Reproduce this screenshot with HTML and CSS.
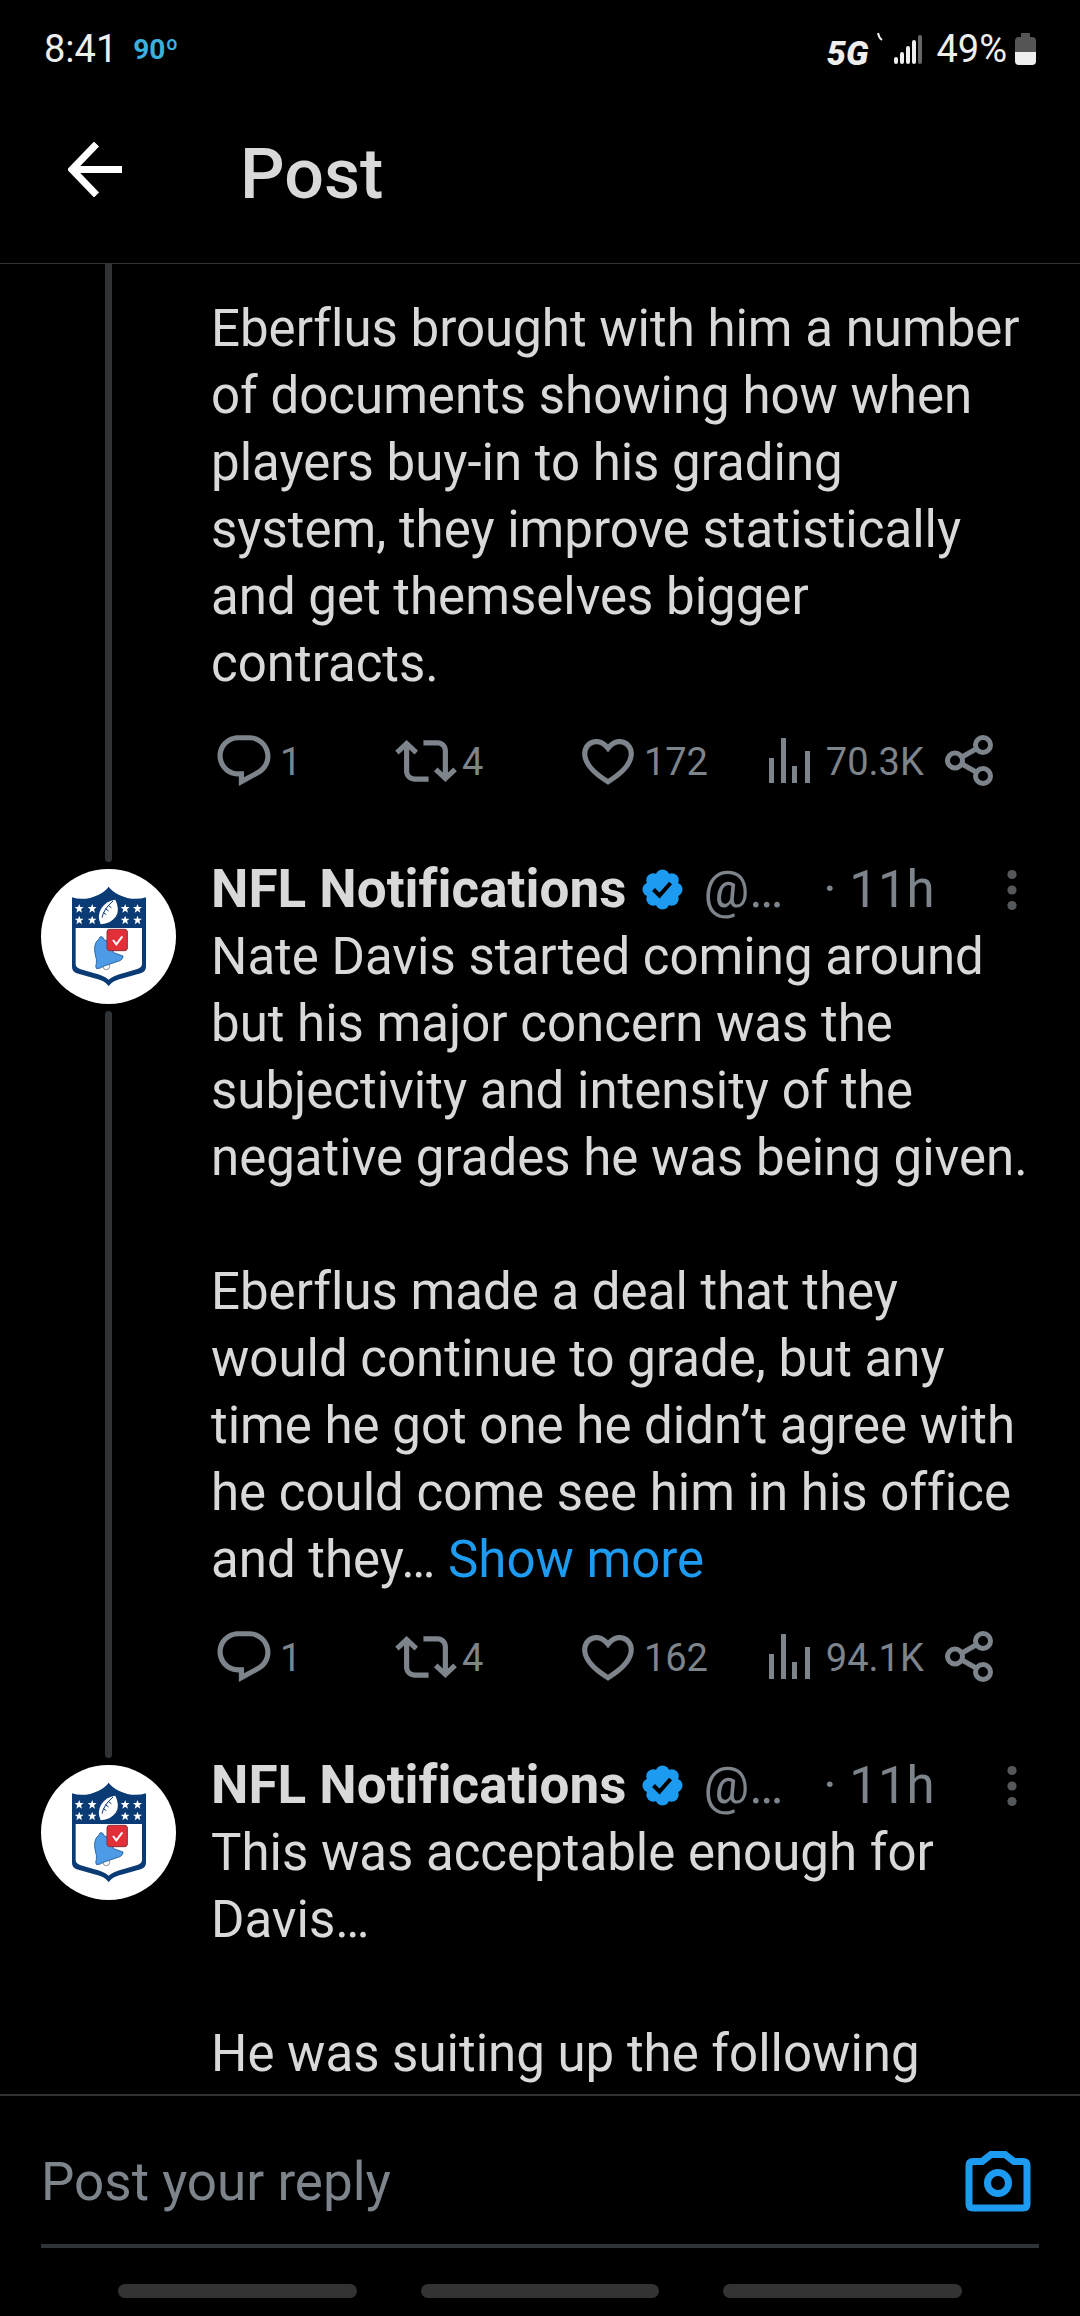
FILE: index.html
```html
<!DOCTYPE html>
<html lang="en">
<head>
<meta charset="utf-8">
<meta name="viewport" content="width=device-width, initial-scale=1">
<title>Post</title>
<link rel="stylesheet" href="styles.css">
</head>
<body>
<svg class="sprite" aria-hidden="true">
  <symbol id="i-reply" viewBox="0 0 24 24"><path d="M1.751 10c0-4.42 3.584-8 8.005-8h4.366c4.49 0 8.129 3.64 8.129 8.13 0 2.96-1.607 5.68-4.196 7.11l-8.054 4.46v-3.69h-.067c-4.49.1-8.183-3.51-8.183-8.01zm8.005-6c-3.317 0-6.005 2.69-6.005 6 0 3.37 2.77 6.08 6.138 6.01l.351-.01h1.761v2.3l5.087-2.81c1.951-1.08 3.163-3.13 3.163-5.36 0-3.39-2.744-6.13-6.129-6.13H9.756z"/></symbol>
  <symbol id="i-repost" viewBox="0 0 24 24"><path d="M4.5 3.88l4.432 4.14-1.364 1.46L5.5 7.55V16c0 1.1.896 2 2 2H13v2H7.5c-2.209 0-4-1.79-4-4V7.55L1.432 9.48.068 8.02 4.5 3.88zM16.5 6H11V4h5.5c2.209 0 4 1.79 4 4v8.45l2.068-1.93 1.364 1.46-4.432 4.14-4.432-4.14 1.364-1.46 2.068 1.93V8c0-1.1-.896-2-2-2z"/></symbol>
  <symbol id="i-like" viewBox="0 0 24 24"><path d="M16.697 5.5c-1.222-.06-2.679.51-3.89 2.16l-.805 1.09-.806-1.09C9.984 6.01 8.526 5.44 7.304 5.5c-1.243.07-2.349.78-2.91 1.91-.552 1.12-.633 2.78.479 4.82 1.074 1.97 3.257 4.27 7.129 6.61 3.87-2.34 6.052-4.64 7.126-6.61 1.111-2.04 1.03-3.7.477-4.82-.561-1.13-1.666-1.84-2.908-1.91zm4.187 7.69c-1.351 2.48-4.001 5.12-8.379 7.67l-.503.3-.504-.3c-4.379-2.55-7.029-5.19-8.382-7.67-1.36-2.5-1.41-4.86-.514-6.67.887-1.79 2.647-2.91 4.601-3.01 1.651-.09 3.368.56 4.798 2.01 1.429-1.45 3.146-2.1 4.796-2.01 1.954.1 3.714 1.22 4.601 3.01.896 1.81.846 4.17-.514 6.67z"/></symbol>
  <symbol id="i-views" viewBox="0 0 62 62"><path d="M10 28h5v25h-5zM22 8h5v45h-5zM33 36h5v17h-5zM46 21h5v32h-5z"/></symbol>
  <symbol id="i-share" viewBox="0 0 62 62"><g fill="none" stroke="currentColor" stroke-width="5"><circle cx="17" cy="30.500" r="7.500"/><circle cx="45" cy="15" r="7.500"/><circle cx="45" cy="46" r="7.500"/><path d="M24 27l14-8M24 34l14 8"/></g></symbol>
  <symbol id="i-verified" viewBox="0 0 41 41"><g fill="#1d9bf0"><circle cx="20.500" cy="20.500" r="16"/><circle cx="20.500" cy="7.500" r="7"/><circle cx="29.700" cy="11.300" r="7"/><circle cx="33.500" cy="20.500" r="7"/><circle cx="29.700" cy="29.700" r="7"/><circle cx="20.500" cy="33.500" r="7"/><circle cx="11.300" cy="29.700" r="7"/><circle cx="7.500" cy="20.500" r="7"/><circle cx="11.300" cy="11.300" r="7"/></g><path d="M11.500 20.500l6 6L28.600 14" fill="none" stroke="#000" stroke-width="4"/></symbol>
  <symbol id="i-more" viewBox="0 0 10 42"><circle cx="5" cy="5.500" r="4.600"/><circle cx="5" cy="21" r="4.600"/><circle cx="5" cy="36.500" r="4.600"/></symbol>
  <symbol id="star" viewBox="0 0 26 26"><path d="M13 0l3.300 9H26l-7.600 6 2.800 10L13 19.200 4.800 25l2.800-10L0 9h9.700z" fill="#fff"/></symbol>
  <symbol id="logo" viewBox="33 57 405 405">
    <circle cx="235.500" cy="259.500" r="202.500" fill="#fff"/>
    <path d="M236 110q10 14 30 24 42 20 82 8v208q0 14-16 20l-50 14q-36 8-46 24-10-16-46-24l-50-14q-14-6-14-20V142q38 12 80-8 20-10 30-24z" fill="#0b3b75"/>
    <path d="M137 234h199v108q0 10-14 15l-38 11q-36 9-48 21-12-12-48-21l-38-11q-13-5-13-15z" fill="#fff"/>
    <use href="#star" x="134" y="162" width="27" height="27"/><use href="#star" x="173" y="162" width="27" height="27"/>
    <use href="#star" x="134" y="197" width="27" height="27"/><use href="#star" x="173" y="197" width="27" height="27"/>
    <use href="#star" x="272" y="162" width="27" height="27"/><use href="#star" x="309" y="162" width="27" height="27"/>
    <use href="#star" x="272" y="197" width="27" height="27"/><use href="#star" x="309" y="197" width="27" height="27"/>
    <path d="M256 149q14 28 2 50-14 22-46 24-12-24 2-48 14-22 42-26z" fill="#fff"/>
    <path d="M249 153q-28 24-33 50m3-16l10 7m-3-18l10 7m-1-17l9 7" fill="none" stroke="#0b3b75" stroke-width="3"/>
    <circle cx="229" cy="349" r="10" fill="#fff" stroke="#555" stroke-width="2"/>
    <path d="M207 267q1-8 8-7 5 1 6 8 16 4 22 20l8 20 28 10q2 8-9 14l-48 16q-12 8-22 8-5-6-1-15 2-14-3-26-8-34 11-48z" fill="#4d9be6" stroke="#34699f" stroke-width="3"/>
    <rect x="231" y="238" width="61" height="64" rx="8" fill="#e32f38" stroke="#8d2d3b" stroke-width="3"/>
    <path d="M249 270l10 13 18-24" fill="none" stroke="#fff" stroke-width="6"/>
  </symbol>
</svg>

<div class="screen">
  <div class="status">
    <span class="clock">8:41</span>
    <span class="temp">90º</span>
    <span class="network">5G</span>
    <svg class="signal" width="46" height="36" viewBox="0 0 46 36" aria-hidden="true"><path d="M2 2q1 5 4 7" fill="none" stroke="#eee" stroke-width="2"/><g stroke="#eee" stroke-width="4" stroke-linecap="round"><path d="M20 28v3M26 23v8M32 17v14M38 11v20"/><path d="M44 6v25" stroke="#666"/></g></svg>
    <span class="level">49%</span>
    <svg class="battery" width="21" height="32" viewBox="0 0 21 32" aria-hidden="true"><path d="M6 0h9v4h2q4 0 4 4v11H0V8q0-4 4-4h2z" fill="#555"/><path d="M0 19h21v9q0 4-4 4H4q-4 0-4-4z" fill="#eee"/></svg>
  </div>

  <header class="topbar">
    <button class="back" aria-label="Back"><svg width="54" height="55" viewBox="0 0 54 55"><path d="M54 27.500H5M28.500 2L4 27.500 28.500 53" fill="none" stroke="#fff" stroke-width="7"/></svg></button>
    <h1 class="title">Post</h1>
  </header>

  <main class="thread">
    <article class="post">
      <div class="side"><span class="rail"></span></div>
      <div class="content continued">
        <p class="text">Eberflus brought with him a number<br>of documents showing how when<br>players buy-in to his grading<br>system, they improve statistically<br>and get themselves bigger<br>contracts.</p>
        <div class="actions">
          <button class="action" aria-label="Reply"><svg><use href="#i-reply"/></svg><span>1</span></button>
          <button class="action" aria-label="Repost"><svg><use href="#i-repost"/></svg><span>4</span></button>
          <button class="action" aria-label="Like"><svg><use href="#i-like"/></svg><span>172</span></button>
          <button class="action" aria-label="Views"><svg><use href="#i-views"/></svg><span>70.3K</span></button>
          <button class="action" aria-label="Share"><svg><use href="#i-share"/></svg></button>
        </div>
      </div>
    </article>

    <article class="post">
      <div class="side">
        <span class="stub"></span>
        <svg class="avatar" role="img" aria-label="NFL Notifications"><use href="#logo"/></svg>
        <span class="rail started"></span>
      </div>
      <div class="content">
        <div class="byline">
          <span class="name">NFL Notifications</span>
          <svg class="verified" role="img" aria-label="Verified"><use href="#i-verified"/></svg>
          <span class="handle">@…</span>
          <span class="time">· 11h</span>
          <button class="more" aria-label="More"><svg><use href="#i-more"/></svg></button>
        </div>
        <p class="text">Nate Davis started coming around<br>but his major concern was the<br>subjectivity and intensity of the<br>negative grades he was being given.<br><br>Eberflus made a deal that they<br>would continue to grade, but any<br>time he got one he didn’t agree with<br>he could come see him in his office<br>and they… <a class="link" href="#">Show more</a></p>
        <div class="actions">
          <button class="action" aria-label="Reply"><svg><use href="#i-reply"/></svg><span>1</span></button>
          <button class="action" aria-label="Repost"><svg><use href="#i-repost"/></svg><span>4</span></button>
          <button class="action" aria-label="Like"><svg><use href="#i-like"/></svg><span>162</span></button>
          <button class="action" aria-label="Views"><svg><use href="#i-views"/></svg><span>94.1K</span></button>
          <button class="action" aria-label="Share"><svg><use href="#i-share"/></svg></button>
        </div>
      </div>
    </article>

    <article class="post">
      <div class="side">
        <span class="stub"></span>
        <svg class="avatar" role="img" aria-label="NFL Notifications"><use href="#logo"/></svg>
      </div>
      <div class="content">
        <div class="byline">
          <span class="name">NFL Notifications</span>
          <svg class="verified" role="img" aria-label="Verified"><use href="#i-verified"/></svg>
          <span class="handle">@…</span>
          <span class="time">· 11h</span>
          <button class="more" aria-label="More"><svg><use href="#i-more"/></svg></button>
        </div>
        <p class="text">This was acceptable enough for<br>Davis…<br><br>He was suiting up the following</p>
      </div>
    </article>
  </main>

  <footer class="composer">
    <form class="reply">
      <input class="field" type="text" placeholder="Post your reply" aria-label="Post your reply">
      <button class="camera" type="button" aria-label="Add photo"><svg width="66" height="62" viewBox="0 0 66 62"><g fill="none" stroke="#1d9bf0" stroke-width="7"><path d="M8 10.500h9L26 3.500h14l9 7h9q4 0 4 4V53q0 4-4 4H8q-4 0-4-4V14.500q0-4 4-4z"/><circle cx="33" cy="32" r="10.500"/></g></svg></button>
    </form>
    <div class="gestures"><span class="pill"></span><span class="pill"></span><span class="pill"></span></div>
  </footer>
</div>
</body>
</html>
```
FILE: styles.css
```css
* { box-sizing: border-box; }

body {
  margin: 0;
  background: #000;
  color: #d9d9d9;
  font-family: Roboto, "Liberation Sans", sans-serif;
  font-size: 51px;
  line-height: 67px;
  font-variant-ligatures: none;
}

button {
  padding: 0;
  border: 0;
  background: none;
  color: inherit;
  font: inherit;
  cursor: pointer;
}

svg { display: block; flex: none; fill: currentColor; }
.sprite { position: absolute; width: 0; height: 0; }

.screen { display: flex; flex-direction: column; height: 100vh; }

/* Status bar */
.status {
  display: flex;
  align-items: center;
  height: 98px;
  padding: 0 44px;
  color: #eee;
  font-size: 38px;
}
.temp {
  margin: 0 auto 0 16px;
  color: #3ab0df;
  font-size: 28px;
  font-weight: 700;
}
.network { padding-top: 8px; font-size: 34px; font-weight: 900; font-style: italic; }
.signal { margin-left: 8px; overflow: visible; }
.level { margin-left: 14px; }
.battery { margin-left: 8px; }

/* Title bar */
.topbar {
  display: flex;
  align-items: center;
  height: 166px;
  padding: 0 68px 22px;
  border-bottom: 1px solid #2f3336;
}
.title { margin: 0 0 0 118px; padding-top: 10px; font-size: 70px; font-weight: 500; }

/* Thread */
.thread { flex: 1; min-height: 0; overflow: hidden; }
.post { display: flex; gap: 35px; padding: 0 40px 0 41px; }
.side { display: flex; flex-direction: column; align-items: center; width: 135px; flex: none; }
.rail { flex: 1; width: 7px; background: #2f3336; }
.rail.started { border-radius: 4px 4px 0 0; }
.stub { width: 7px; height: 6px; background: #2f3336; border-radius: 0 0 4px 4px; }
.avatar { width: 135px; height: 135px; margin: 7px 0; }

.content { flex: 1; min-width: 0; }
.continued { padding-top: 31px; }
.text { margin: 0; white-space: nowrap; }
.link { color: #1d9bf0; text-decoration: none; }

.byline { display: flex; align-items: center; height: 67px; color: #7d848b; }
.name { color: #d9d9d9; font-size: 53px; font-weight: 700; }
.verified { width: 41px; height: 41px; margin: 0 20px 0 16px; }
.time { margin-left: 40px; }
.more { margin: 0 23px 0 auto; color: #55585b; }
.more svg { width: 10px; height: 42px; }

.actions {
  display: grid;
  grid-template-columns: 22% 22% 22% 22%;
  padding: 33px 0 64px 2px;
  color: #7d848b;
  font-size: 38px;
  line-height: 62px;
}
.action { display: flex; align-items: center; gap: 5px; height: 62px; }
.action:last-child { grid-column: 5; margin-left: -3px; }
.action svg { width: 62px; height: 62px; }
.action span { padding-top: 2px; }

/* Reply box */
.composer { border-top: 2px solid #2f3336; padding: 0 41px 18px; }
.reply {
  display: flex;
  align-items: center;
  height: 152px;
  padding-top: 24px;
  border-bottom: 4px solid #2f3336;
}
.field {
  flex: 1;
  min-width: 0;
  padding: 0;
  border: 0;
  outline: 0;
  background: none;
  color: #d9d9d9;
  font: inherit;
  font-size: 53px;
}
.field::placeholder { color: #7d848b; opacity: 1; }
.camera { margin-right: 8px; }

.gestures { display: flex; gap: 64px; padding: 36px 77px 0; }
.pill { flex: 1; height: 14px; border-radius: 7px; background: #333; }
```
